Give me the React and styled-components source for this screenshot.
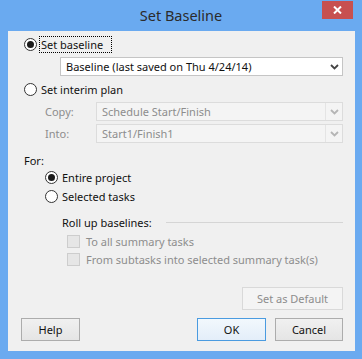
import React from 'react'
import styled, { createGlobalStyle } from 'styled-components'

const Global = createGlobalStyle`
  html, body { margin: 0; padding: 0; background: #6aaaf0; }
  * { box-sizing: border-box; }
`

const Window = styled.div`
  width: 362px;
  height: 359px;
  background: #6aaaf0;
  display: flex;
  flex-direction: column;
  font-family: "Noto Sans", "Open Sans", sans-serif;
  font-size: 11px;
  color: #111;
`

const TitleBar = styled.div`
  height: 31px;
  display: grid;
  grid-template-columns: 1fr auto 1fr;
`

const Title = styled.div`
  grid-column: 2;
  align-self: center;
  font-size: 14.5px;
  color: #2b2b2b;
  padding-bottom: 1px;
`

const CloseBtn = styled.div`
  grid-column: 3;
  justify-self: end;
  align-self: start;
  margin-top: 1px;
  margin-right: 9px;
  width: 31px;
  height: 18px;
  background: #c75050;
  display: flex;
  align-items: center;
  justify-content: center;
`

const Body = styled.div`
  flex: 1;
  margin: 0 7px 8px 8px;
  background: #f0f0f0;
  padding: 5px 12px 0 16px;
  display: flex;
  flex-direction: column;
`

const Row = styled.div`
  display: flex;
  align-items: center;
  height: ${p => p.h || 17}px;
  margin-top: ${p => p.mt || 0}px;
  margin-left: ${p => p.ml || 0}px;
`

const Circle = styled.span`
  width: 13px;
  height: 13px;
  border-radius: 50%;
  border: 1px solid #333;
  background: #fff;
  display: flex;
  align-items: center;
  justify-content: center;
  flex-shrink: 0;
  &::after {
    content: '';
    width: 7px;
    height: 7px;
    border-radius: 50%;
    background: ${p => (p.checked ? '#1a1a1a' : 'transparent')};
  }
`

const Label = styled.span`
  margin-left: ${p => p.gap ?? 4}px;
  color: ${p => (p.disabled ? '#8d8d8d' : '#111')};
  white-space: nowrap;
`

const FocusLabel = styled.span`
  margin-left: 2px;
  padding: 0 1px;
  height: 17px;
  width: 73px;
  border: 1px dotted #000;
  display: flex;
  align-items: center;
  white-space: nowrap;
`

const Combo = styled.div`
  flex: 1;
  height: 19px;
  border: 1px solid ${p => (p.disabled ? '#dcdcdc' : '#c5c5c5')};
  background: ${p => (p.disabled ? '#f4f4f4' : '#fff')};
  color: ${p => (p.disabled ? '#8d8d8d' : '#111')};
  display: flex;
  align-items: center;
  padding-left: 5px;
`

const ComboText = styled.span`
  flex: 1;
  white-space: nowrap;
`

const ComboArrow = styled.span`
  width: 17px;
  height: 100%;
  display: flex;
  align-items: center;
  justify-content: center;
  border-left: 1px solid ${p => (p.sep ? '#e4e4e4' : 'transparent')};
`

const FieldLabel = styled.span`
  width: 51px;
  color: #8d8d8d;
  flex-shrink: 0;
`

const GroupLine = styled.span`
  flex: 1;
  height: 1px;
  margin-left: 14px;
  background: #d5d5d5;
`

const Box = styled.span`
  width: 13px;
  height: 13px;
  border: 1px solid #cdcdcd;
  background: #e6e6e6;
  flex-shrink: 0;
`

const Button = styled.div`
  width: ${p => p.w}px;
  height: 23px;
  display: flex;
  align-items: center;
  justify-content: center;
  border: 1px solid ${p => (p.primary ? '#4a9be0' : p.disabled ? '#d9d9d9' : '#acacac')};
  background: ${p =>
    p.disabled ? '#f4f4f4' : p.primary ? 'linear-gradient(#f2f8fd, #e3eef9)' : 'linear-gradient(#f0f0f0, #e5e5e5)'};
  color: ${p => (p.disabled ? '#8d8d8d' : '#111')};
  white-space: nowrap;
`

const DefaultRow = styled.div`
  display: flex;
  justify-content: flex-end;
  margin-top: 19px;
`

const ButtonRow = styled.div`
  display: flex;
  margin-top: 8px;
  margin-left: -3px;
  gap: 9px;
`

const Spacer = styled.div`
  flex: 1;
`

const Chevron = ({ color }) => (
  <svg width="9" height="6" viewBox="0 0 9 6">
    <path d="M1 1 L4.5 4.5 L8 1" fill="none" stroke={color} strokeWidth="1.8" />
  </svg>
)

const Radio = ({ checked, label, ml, mt }) => (
  <Row ml={ml} mt={mt}>
    <Circle checked={checked} />
    <Label>{label}</Label>
  </Row>
)

const Check = ({ label, mt }) => (
  <Row ml={43} mt={mt}>
    <Box />
    <Label gap={6} disabled>{label}</Label>
  </Row>
)

export default function App() {
  return (
    <>
      <Global />
      <Window>
        <TitleBar>
          <Title>Set Baseline</Title>
          <CloseBtn>
            <svg width="9" height="8" viewBox="0 0 9 8">
              <path d="M1 0.5 L8 7.5 M8 0.5 L1 7.5" stroke="#fff" strokeWidth="2" />
            </svg>
          </CloseBtn>
        </TitleBar>
        <Body>
          <Row>
            <Circle checked />
            <FocusLabel>Set baseline</FocusLabel>
          </Row>
          <Row h={19} mt={4} ml={36}>
            <Combo>
              <ComboText>Baseline (last saved on Thu 4/24/14)</ComboText>
              <ComboArrow>
                <Chevron color="#444" />
              </ComboArrow>
            </Combo>
          </Row>
          <Radio label="Set interim plan" mt={5} />
          <Row h={19} mt={4} ml={21}>
            <FieldLabel>Copy:</FieldLabel>
            <Combo disabled>
              <ComboText>Schedule Start/Finish</ComboText>
              <ComboArrow sep>
                <Chevron color="#b5b5b5" />
              </ComboArrow>
            </Combo>
          </Row>
          <Row h={19} mt={3} ml={21}>
            <FieldLabel>Into:</FieldLabel>
            <Combo disabled>
              <ComboText>Start1/Finish1</ComboText>
              <ComboArrow sep>
                <Chevron color="#b5b5b5" />
              </ComboArrow>
            </Combo>
          </Row>
          <Row mt={9}>
            <Label gap={0}>For:</Label>
          </Row>
          <Radio checked label="Entire project" ml={21} />
          <Radio label="Selected tasks" ml={21} mt={2} />
          <Row mt={9} ml={38}>
            <Label gap={0}>Roll up baselines:</Label>
            <GroupLine />
          </Row>
          <Check label="To all summary tasks" mt={2} />
          <Check label="From subtasks into selected summary task(s)" mt={1} />
          <DefaultRow>
            <Button w={101} disabled>Set as Default</Button>
          </DefaultRow>
          <ButtonRow>
            <Button w={59}>Help</Button>
            <Spacer />
            <Button w={69} primary>OK</Button>
            <Button w={68}>Cancel</Button>
          </ButtonRow>
        </Body>
      </Window>
    </>
  )
}
